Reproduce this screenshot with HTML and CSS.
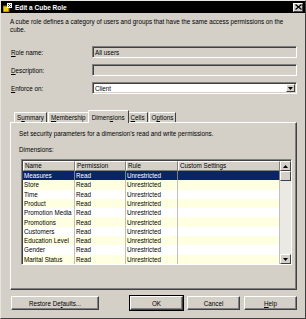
FILE: index.html
```html
<!DOCTYPE html>
<html lang="en">
<head>
    <meta charset="UTF-8">
    <title>Edit a Cube Role</title>
    <link rel="stylesheet" href="styles.css">
</head>
<body>
    <div class="window">
        <div class="titlebar">
            <svg class="app-icon" width="9" height="9" viewBox="0 0 9 9">
                <rect x="0" y="3" width="6" height="6" fill="#f0d000" stroke="#806000" stroke-width="1"/>
                <rect x="4" y="0" width="5" height="5" fill="#ffffff"/>
                <path d="M5 1 L8 4 M8 1 L5 4" stroke="#404040" stroke-width="1"/>
            </svg>
            <span class="title">Edit a Cube Role</span>
            <span class="close-btn">
                <svg width="7" height="6" viewBox="0 0 7 6"><path d="M0.5 0.5 L6.5 5.5 M6.5 0.5 L0.5 5.5" stroke="#000" stroke-width="1.3"/></svg>
            </span>
        </div>

        <div class="body">
            <p class="intro">A cube role defines a category of users and groups that have the same access permissions on the cube.</p>

            <div class="form">
                <div class="form-row">
                    <label><u>R</u>ole name:</label>
                    <div class="field disabled">All users</div>
                </div>
                <div class="form-row">
                    <label><u>D</u>escription:</label>
                    <div class="field disabled"></div>
                </div>
                <div class="form-row">
                    <label><u>E</u>nforce on:</label>
                    <div class="field select">
                        <span class="select-text">Client</span>
                        <span class="drop-btn"><svg width="5" height="3" viewBox="0 0 5 3"><path d="M0 0 H5 L2.5 3 Z" fill="#000"/></svg></span>
                    </div>
                </div>
            </div>

            <div class="tabs">
                <div class="tab">S<u>u</u>mmary</div>
                <div class="tab"><u>M</u>embership</div>
                <div class="tab active">Dimen<u>s</u>ions</div>
                <div class="tab"><u>C</u>ells</div>
                <div class="tab">O<u>p</u>tions</div>
            </div>

            <div class="panel">
                <p class="panel-text">Set security parameters for a dimension's read and write permissions.</p>
                <p class="panel-label">Dimensions:</p>

                <div class="grid">
                    <div class="grid-body">
                        <div class="row header">
                            <div class="cell c-name">Name</div>
                            <div class="cell c-perm">Permission</div>
                            <div class="cell c-rule">Rule</div>
                            <div class="cell c-custom">Custom Settings</div>
                        </div>
                        <div class="row selected">
                            <div class="cell c-name">Measures</div>
                            <div class="cell c-perm">Read</div>
                            <div class="cell c-rule">Unrestricted</div>
                            <div class="cell c-custom"></div>
                        </div>
                        <div class="row alt">
                            <div class="cell c-name">Store</div>
                            <div class="cell c-perm">Read</div>
                            <div class="cell c-rule">Unrestricted</div>
                            <div class="cell c-custom"></div>
                        </div>
                        <div class="row">
                            <div class="cell c-name">Time</div>
                            <div class="cell c-perm">Read</div>
                            <div class="cell c-rule">Unrestricted</div>
                            <div class="cell c-custom"></div>
                        </div>
                        <div class="row alt">
                            <div class="cell c-name">Product</div>
                            <div class="cell c-perm">Read</div>
                            <div class="cell c-rule">Unrestricted</div>
                            <div class="cell c-custom"></div>
                        </div>
                        <div class="row">
                            <div class="cell c-name">Promotion Media</div>
                            <div class="cell c-perm">Read</div>
                            <div class="cell c-rule">Unrestricted</div>
                            <div class="cell c-custom"></div>
                        </div>
                        <div class="row alt">
                            <div class="cell c-name">Promotions</div>
                            <div class="cell c-perm">Read</div>
                            <div class="cell c-rule">Unrestricted</div>
                            <div class="cell c-custom"></div>
                        </div>
                        <div class="row">
                            <div class="cell c-name">Customers</div>
                            <div class="cell c-perm">Read</div>
                            <div class="cell c-rule">Unrestricted</div>
                            <div class="cell c-custom"></div>
                        </div>
                        <div class="row alt">
                            <div class="cell c-name">Education Level</div>
                            <div class="cell c-perm">Read</div>
                            <div class="cell c-rule">Unrestricted</div>
                            <div class="cell c-custom"></div>
                        </div>
                        <div class="row">
                            <div class="cell c-name">Gender</div>
                            <div class="cell c-perm">Read</div>
                            <div class="cell c-rule">Unrestricted</div>
                            <div class="cell c-custom"></div>
                        </div>
                        <div class="row alt">
                            <div class="cell c-name">Marital Status</div>
                            <div class="cell c-perm">Read</div>
                            <div class="cell c-rule">Unrestricted</div>
                            <div class="cell c-custom"></div>
                        </div>
                    </div>
                    <div class="scrollbar">
                        <div class="sb-btn"><svg width="5" height="3" viewBox="0 0 5 3"><path d="M0 3 H5 L2.5 0 Z" fill="#000"/></svg></div>
                        <div class="sb-thumb"></div>
                        <div class="sb-track"></div>
                        <div class="sb-btn"><svg width="5" height="3" viewBox="0 0 5 3"><path d="M0 0 H5 L2.5 3 Z" fill="#000"/></svg></div>
                    </div>
                </div>
            </div>

            <div class="buttons">
                <div class="btn restore">Restore De<u>f</u>aults...</div>
                <div class="spacer"></div>
                <div class="btn default">OK</div>
                <div class="btn">Cancel</div>
                <div class="btn"><u>H</u>elp</div>
            </div>
        </div>
    </div>
</body>
</html>
```

FILE: styles.css
```css
* {
    box-sizing: border-box;
}

body {
    margin: 0;
    font-family: "Liberation Sans", Arial, sans-serif;
    font-size: 6.3px;
    color: #000;
    background: #d4d0c8;
}

.window {
    width: 306px;
    height: 319px;
    background: #d4d0c8;
    border: 1px solid #e8e6e0;
    border-right-color: #404040;
    border-bottom-color: #404040;
    display: flex;
    flex-direction: column;
}

.titlebar {
    height: 12px;
    background: #000;
    display: flex;
    align-items: center;
    padding: 0 2px 0 2px;
}

.app-icon {
    margin-right: 3px;
}

.title {
    color: #fff;
    font-weight: bold;
    font-size: 6.5px;
    flex: 1;
}

.close-btn {
    width: 10px;
    height: 9px;
    background: #d4d0c8;
    border: 1px solid #fff;
    border-right-color: #404040;
    border-bottom-color: #404040;
    display: flex;
    align-items: center;
    justify-content: center;
}

.body {
    flex: 1;
    padding: 0 8px 0 9px;
    display: flex;
    flex-direction: column;
}

.intro {
    margin: 5px 0 0 0;
    line-height: 8px;
    width: 280px;
}

.form {
    margin-top: 12px;
    display: flex;
    flex-direction: column;
    gap: 6px;
}

.form-row {
    display: flex;
    align-items: center;
    height: 12px;
}

.form-row label {
    width: 82px;
    padding-left: 1px;
}

.field {
    flex: 1;
    height: 12px;
    border: 1px solid #808080;
    border-right-color: #fff;
    border-bottom-color: #fff;
    box-shadow: inset 1px 1px 0 #404040, inset -1px -1px 0 #d4d0c8;
    display: flex;
    align-items: center;
    padding-left: 2px;
}

.field.disabled {
    background: #d4d0c8;
}

.field.select {
    background: #fff;
    padding-right: 1px;
}

.select-text {
    flex: 1;
}

.drop-btn {
    width: 9px;
    height: 8px;
    background: #d4d0c8;
    border: 1px solid #fff;
    border-right-color: #404040;
    border-bottom-color: #404040;
    display: flex;
    align-items: center;
    justify-content: center;
}

.tabs {
    margin-top: 16px;
    display: flex;
    align-items: flex-end;
    height: 12px;
    padding-left: 4px;
}

.tab {
    height: 10px;
    padding: 0 2px;
    border: 1px solid #fff;
    border-bottom: none;
    border-right-color: #404040;
    display: flex;
    align-items: center;
    margin-right: 1px;
}

.tab.active {
    padding: 0 3px;
    margin: 0 -1px -1px -2px;
    position: relative;
    z-index: 1;
    background: #d4d0c8;
    height: 13px;
}

.panel {
    height: 168px;
    border: 1px solid #fff;
    border-right-color: #404040;
    border-bottom-color: #404040;
    box-shadow: inset -1px -1px 0 #808080;
    padding: 7px 6px 0 8px;
}

.panel-text {
    margin: 0;
    line-height: 8px;
}

.panel-label {
    margin: 8px 0 0 0;
    line-height: 8px;
}

.grid {
    margin-top: 5px;
    margin-left: 2px;
    width: 271px;
    height: 106px;
    border: 1px solid #808080;
    border-right-color: #fff;
    border-bottom-color: #fff;
    box-shadow: inset 1px 1px 0 #404040;
    display: flex;
    padding: 1px 0 0 1px;
}

.grid-body {
    flex: 1;
    background: #fff;
    display: flex;
    flex-direction: column;
}

.row {
    display: flex;
    height: 9.35px;
}

.row.header {
    height: 10px;
    background: #d4d0c8;
}

.row.alt {
    background: #ffffe1;
}

.row.selected {
    background: #0a246a;
    color: #fff;
}

.cell {
    border-right: 1px solid #c0c0c0;
    display: flex;
    align-items: center;
    padding-left: 1px;
    white-space: nowrap;
    overflow: hidden;
}

.header .cell {
    border: 1px solid #fff;
    border-right-color: #808080;
    border-bottom-color: #808080;
}

.selected .cell {
    border-right-color: #808080;
}

.c-name {
    width: 52px;
}

.c-perm {
    width: 51px;
}

.c-rule {
    width: 52px;
}

.c-custom {
    flex: 1;
}

.scrollbar {
    width: 11px;
    display: flex;
    flex-direction: column;
    background: #ebe9e4;
}

.sb-btn,
.sb-thumb {
    height: 10px;
    background: #d4d0c8;
    border: 1px solid #fff;
    border-right-color: #404040;
    border-bottom-color: #404040;
    display: flex;
    align-items: center;
    justify-content: center;
}

.sb-track {
    flex: 1;
}

.buttons {
    margin-top: 6px;
    display: flex;
    gap: 4px;
    padding-left: 1px;
}

.btn {
    width: 53px;
    height: 14px;
    border: 1px solid #fff;
    border-right-color: #404040;
    border-bottom-color: #404040;
    box-shadow: inset -1px -1px 0 #808080;
    display: flex;
    align-items: center;
    justify-content: center;
}

.btn.restore {
    width: 88px;
}

.btn.default {
    outline: 1px solid #000;
}

.spacer {
    flex: 1;
}
```
